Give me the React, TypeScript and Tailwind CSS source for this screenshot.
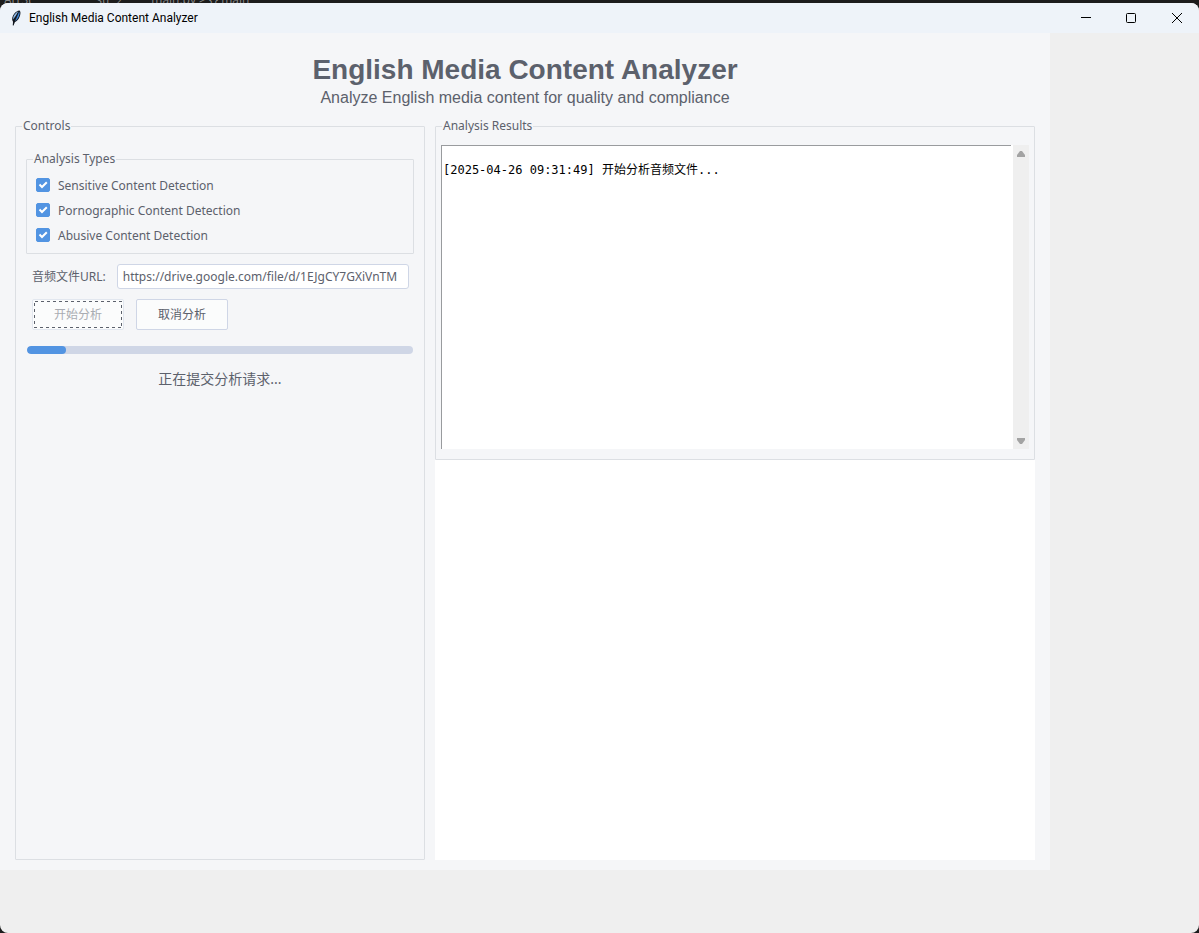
import { useState } from "react";

const ANALYSIS_TYPES = [
  { id: "sensitive", label: "Sensitive Content Detection" },
  { id: "pornographic", label: "Pornographic Content Detection" },
  { id: "abusive", label: "Abusive Content Detection" },
];

function FeatherIcon() {
  return (
    <svg width="12" height="16" viewBox="0 0 12 16" aria-hidden="true">
      <path
        d="M9.3 0.4C11 1 10.6 4.2 9.6 6.8C8.8 9 7 11.2 4.6 12.2L3.6 15.6L2.8 15.4L3 11.8C1.4 9.4 2.2 6 4.4 3.4C6 1.6 7.6 0.6 9.3 0.4Z"
        fill="#10151d"
      />
      <path d="M9 1.5C10.2 2.8 9.4 5.2 8.4 7.2C7.5 9 6.4 10.4 4.8 11L6.9 6.4Z" fill="#3f86d8" />
      <path d="M8.2 1.6C5.2 3 2.8 6 3.1 9.6L5.8 5.8Z" fill="#8fb9e6" />
      <path d="M8.4 2.6L3.3 14.6" stroke="#10151d" strokeWidth="0.6" fill="none" />
    </svg>
  );
}

function TitleBar() {
  return (
    <header className="flex h-[30px] items-center rounded-t-lg bg-[#eef3f9] pl-2.5">
      <FeatherIcon />
      <span className="ml-[7px] flex-1 font-[Roboto,sans-serif] text-[12px] leading-4 text-black">
        English Media Content Analyzer
      </span>
      <button type="button" aria-label="Minimize" className="flex h-full w-[45px] items-center justify-center">
        <svg width="10" height="10" viewBox="0 0 10 10" aria-hidden="true">
          <path d="M0 4.5H10" stroke="#000" />
        </svg>
      </button>
      <button type="button" aria-label="Maximize" className="flex h-full w-[46px] items-center justify-center">
        <svg width="10" height="10" viewBox="0 0 10 10" aria-hidden="true">
          <rect x="0.5" y="0.5" width="9" height="9" rx="1" fill="none" stroke="#000" />
        </svg>
      </button>
      <button type="button" aria-label="Close" className="flex h-full w-[45px] items-center justify-center">
        <svg width="10" height="10" viewBox="0 0 10 10" aria-hidden="true">
          <path d="M0 0L10 10M10 0L0 10" stroke="#000" />
        </svg>
      </button>
    </header>
  );
}

function CheckOption({ id, label }: { id: string; label: string }) {
  const [checked, setChecked] = useState(true);
  return (
    <div className="flex h-[25px] items-center gap-2">
      <span className="grid size-3.5 place-items-center">
        <input
          id={id}
          type="checkbox"
          checked={checked}
          onChange={(e) => setChecked(e.target.checked)}
          className="peer col-start-1 row-start-1 size-3.5 appearance-none rounded-[2px] border border-[#cfd6e6] bg-white checked:border-[#5294e2] checked:bg-[#5294e2]"
        />
        <svg
          width="14"
          height="14"
          viewBox="0 0 14 14"
          aria-hidden="true"
          className="pointer-events-none z-10 col-start-1 row-start-1 hidden peer-checked:block"
        >
          <path d="M3.5 6.5L6 9L10.8 4.2" fill="none" stroke="#fff" strokeWidth="2" />
        </svg>
      </span>
      <label htmlFor={id} className="pt-0.5">
        {label}
      </label>
    </div>
  );
}

function FocusRing() {
  return (
    <svg className="pointer-events-none absolute inset-px h-7 w-[88px]" aria-hidden="true">
      <rect
        x="0.5"
        y="0.5"
        width="87"
        height="26"
        fill="none"
        stroke="#5c616c"
        strokeDasharray="3 3"
        shapeRendering="crispEdges"
      />
    </svg>
  );
}

function Controls() {
  const [url, setUrl] = useState("https://drive.google.com/file/d/1EJgCY7GXiVnTM");
  return (
    <fieldset className="min-w-0 rounded-[1px] border border-[#dcdfe3] px-2.5 pt-[17px]">
      <legend className="-ml-1 px-px leading-4">Controls</legend>

      <fieldset className="min-w-0 rounded-[1px] border border-[#dcdfe3] px-[9px] pt-[5px] pb-1.5">
        <legend className="-ml-[3px] px-px leading-4">Analysis Types</legend>
        {ANALYSIS_TYPES.map((type) => (
          <CheckOption key={type.id} id={type.id} label={type.label} />
        ))}
      </fieldset>

      <div className="mt-2.5 flex items-center gap-[11px] pr-[5px] pl-1.5">
        <label htmlFor="audio-url" className="shrink-0">
          音频文件URL:
        </label>
        <input
          id="audio-url"
          type="text"
          value={url}
          onChange={(e) => setUrl(e.target.value)}
          className="h-[25px] min-w-0 flex-1 rounded-[3px] border border-[#cfd6e6] bg-white px-[5px] outline-none"
        />
      </div>

      <div className="mt-2.5 flex gap-3 pl-1.5">
        <button
          type="button"
          disabled
          className="relative h-[31px] w-[92px] rounded-[2px] border border-[#e2e7ef] bg-[#fbfcfc] text-[#a9acb2]"
        >
          开始分析
          <FocusRing />
        </button>
        <button type="button" className="h-[31px] w-[92px] rounded-[2px] border border-[#cfd6e6] bg-[#fbfcfc]">
          取消分析
        </button>
      </div>

      <div
        role="progressbar"
        aria-label="正在提交分析请求"
        aria-valuenow={10}
        aria-valuemin={0}
        aria-valuemax={100}
        className="mx-px mt-4 h-2 overflow-hidden rounded-full bg-[#cfd6e6]"
      >
        <div className="h-full w-1/10 rounded-full bg-[#5294e2]" />
      </div>

      <p className="mt-[15px] text-center text-[14px] leading-5">正在提交分析请求...</p>
    </fieldset>
  );
}

function ScrollBar() {
  return (
    <div className="flex w-4 flex-col items-center justify-between bg-[#efefef] py-1">
      <button type="button" aria-label="Scroll up">
        <svg width="8" height="8" viewBox="0 0 8 8" className="block" aria-hidden="true">
          <path d="M0 8V6L3 2H5L8 6V8Z" fill="#a3a3a3" />
        </svg>
      </button>
      <button type="button" aria-label="Scroll down">
        <svg width="8" height="8" viewBox="0 0 8 8" className="block" aria-hidden="true">
          <path d="M0 1V3L3 7H5L8 3V1Z" fill="#a3a3a3" />
        </svg>
      </button>
    </div>
  );
}

function Results() {
  return (
    <div className="flex min-w-0 flex-col">
      <fieldset className="min-w-0 rounded-[1px] border border-[#dcdfe3] px-[5px] pt-[11px] pb-2.5">
        <legend className="ml-px px-px leading-4">Analysis Results</legend>
        <div className="flex">
          <div className="flex min-w-0 flex-1 bg-white pr-0.5">
            <textarea
              readOnly
              rows={19}
              aria-label="Analysis Results"
              value={"\n[2025-04-26 09:31:49] 开始分析音频文件..."}
              className="block h-[304px] min-w-0 flex-1 resize-none overflow-hidden border-t border-l border-[#999b9e] bg-white px-px font-['DejaVu_Sans_Mono','Noto_Sans_CJK_SC',monospace] text-[12px] leading-4 text-black outline-none"
            />
          </div>
          <ScrollBar />
        </div>
      </fieldset>
      <div className="flex-1 bg-white" />
    </div>
  );
}

// The sliver of the editor window that shows above the title bar.
function BackgroundWindow() {
  return (
    <div
      aria-hidden="true"
      className="flex h-[3px] shrink-0 items-end gap-7 overflow-hidden pl-1 font-['Open_Sans',sans-serif] text-[12px] leading-[7px] whitespace-pre text-[#8a8a8a]"
    >
      <span>ArrSt</span>
      <span className="pl-9">str_2</span>
      <span>main.py &gt; {"{}"} main</span>
    </div>
  );
}

export default function App() {
  return (
    <div className="flex min-h-screen flex-col bg-[#1c1c1c]">
      <BackgroundWindow />
      <div className="flex flex-1 flex-col rounded-lg bg-[#efefef]">
        <TitleBar />
        <main className="mr-[149px] mb-[63px] flex flex-1 flex-col bg-[#f5f6f8] px-[15px] pb-2.5 font-['Noto_Sans','Noto_Sans_CJK_SC',sans-serif] text-[12px] text-[#5c616c]">
          <div className="pt-5 pb-2.5 text-center font-['Liberation_Sans',Arial,sans-serif]">
            <h1 className="text-[28px] leading-[34px] font-bold">English Media Content Analyzer</h1>
            <p className="text-[16px] leading-[21px]">Analyze English media content for quality and compliance</p>
          </div>
          <div className="grid flex-1 grid-cols-[41fr_60fr] gap-2.5">
            <Controls />
            <Results />
          </div>
        </main>
      </div>
    </div>
  );
}
